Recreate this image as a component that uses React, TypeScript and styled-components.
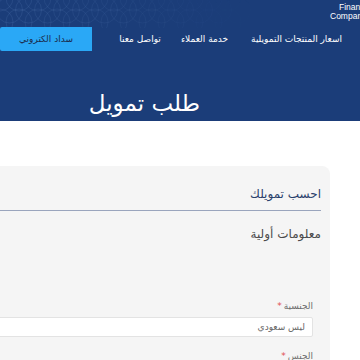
import React from 'react';
import styled, { createGlobalStyle } from 'styled-components';

const GlobalStyle = createGlobalStyle`
  html, body {
    margin: 0;
    padding: 0;
    background: #ffffff;
    overflow: hidden;
    font-family: 'DejaVu Sans', 'Noto Sans', sans-serif;
  }
`;

const navy = '#1b3d79';

const Page = styled.div`
  width: 360px;
  height: 360px;
  overflow: hidden;
  direction: rtl;
  background: #ffffff;
`;

const Header = styled.header`
  position: relative;
  height: 121px;
  background: ${navy};
  overflow: hidden;
`;

const Pattern = styled.svg`
  position: absolute;
  left: 0;
  top: 0;
`;

const TopBar = styled.div`
  position: relative;
  display: flex;
  justify-content: flex-start;
  height: 27px;
`;

const Logo = styled.div`
  direction: ltr;
  text-align: left;
  width: 40px;
  margin-right: -10px;
  padding-top: 3px;
  color: #ffffff;
  font-family: 'Liberation Sans', sans-serif;
  font-size: 8.5px;
  line-height: 8.5px;
  white-space: nowrap;
`;

const LogoLine = styled.div<{ indent: number }>`
  padding-left: ${({ indent }) => indent}px;
`;

const NavRow = styled.nav`
  position: relative;
  display: flex;
  align-items: center;
  height: 24px;
  padding-right: 18px;
`;

const NavLink = styled.a<{ gap: number }>`
  color: #ffffff;
  font-size: 9px;
  margin-left: ${({ gap }) => gap}px;
  white-space: nowrap;
`;

const PayButton = styled.a`
  margin-right: auto;
  width: 92px;
  height: 24px;
  display: flex;
  align-items: center;
  justify-content: center;
  background: #2aa8f6;
  border-top-left-radius: 2px;
  border-bottom-left-radius: 2px;
  color: #1b2a4a;
  font-size: 9px;
`;

const Title = styled.h1`
  position: relative;
  margin: 0;
  padding: 37px 160px 0 0;
  color: #ffffff;
  font-size: 23px;
  font-weight: normal;
  line-height: 30px;
`;

const Body = styled.main`
  padding-top: 45px;
`;

const Card = styled.section`
  margin-right: 30px;
  margin-left: -20px;
  height: 200px;
  background: #f5f5f5;
  border-radius: 8px 8px 0 0;
  padding: 20px 9px 0 0;
`;

const CardTitle = styled.h2`
  margin: 0;
  padding-bottom: 7px;
  border-bottom: 1.5px solid #9aa5bd;
  color: #2a3f6c;
  font-size: 12px;
  font-weight: normal;
  line-height: 17px;
`;

const Section = styled.h3`
  margin: 15px 0 0;
  color: #4a4a4a;
  font-size: 12px;
  font-weight: normal;
  line-height: 16px;
`;

const Field = styled.div<{ top: number }>`
  margin: ${({ top }) => top}px 8px 0 0;
`;

const Label = styled.label`
  display: block;
  color: #6f6f6f;
  font-size: 9px;
  line-height: 12px;
`;

const Star = styled.span`
  color: #e0504f;
  margin-right: 2px;
`;

const Input = styled.div`
  margin-top: 5px;
  height: 18px;
  background: #ffffff;
  border: 1px solid #e3e3e3;
  border-radius: 2px;
  padding-right: 7px;
  display: flex;
  align-items: center;
  color: #666666;
  font-size: 9px;
`;

const circles = () => {
  const items: React.ReactElement[] = [];
  for (let row = 0; row < 3; row++) {
    for (let col = 0; col < 14; col++) {
      const cx = col * 19 + (row % 2 ? 9.5 : 0);
      const cy = row * 12 - 2;
      const op = Math.max(0, 0.22 - col * 0.017);
      items.push(<circle key={`${row}-${col}`} cx={cx} cy={cy} r={13} fill="none" stroke="#6a8cc4" strokeWidth={0.8} opacity={op} />);
    }
  }
  return items;
};

const App = () => (
  <>
    <GlobalStyle />
    <Page>
      <Header>
        <Pattern width="260" height="28" viewBox="0 0 260 28">
          {circles()}
        </Pattern>
        <TopBar>
          <Logo>
            <LogoLine indent={9}>Finance</LogoLine>
            <LogoLine indent={0}>Company</LogoLine>
          </Logo>
        </TopBar>
        <NavRow>
          <NavLink gap={23}>اسعار المنتجات التمويلية</NavLink>
          <NavLink gap={20}>خدمة العملاء</NavLink>
          <NavLink gap={0}>تواصل معنا</NavLink>
          <PayButton>سداد الكتروني</PayButton>
        </NavRow>
        <Title>طلب تمويل</Title>
      </Header>
      <Body>
        <Card>
          <CardTitle>احسب تمويلك</CardTitle>
          <Section>معلومات أولية</Section>
          <Field top={58}>
            <Label>
              الجنسية<Star>*</Star>
            </Label>
            <Input>ليس سعودي</Input>
          </Field>
          <Field top={13}>
            <Label>
              الجنس<Star>*</Star>
            </Label>
          </Field>
        </Card>
      </Body>
    </Page>
  </>
);

export default App;
